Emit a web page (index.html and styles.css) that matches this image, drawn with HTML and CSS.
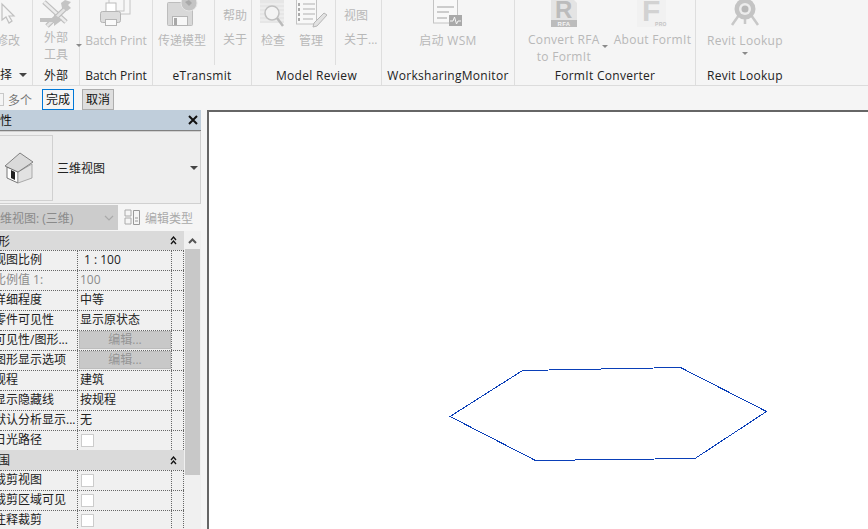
FILE: index.html
```html
<!DOCTYPE html>
<html lang="zh-CN">
<head>
    <meta charset="UTF-8">
    <title>Revit</title>
    <link rel="stylesheet" href="styles.css">
</head>
<body>
    <!-- ribbon -->
    <header class="ribbon">
        <section class="panel p1">
            <div class="tools">
                <div class="tool modify">
                    <svg class="icon" width="24" height="31" viewBox="-4 0 24 31"><path d="M2 4V20L6 17L9 23L12 21L9 16H14Z" fill="#f5f5f5" stroke="#c0c0c0" stroke-width="1.2"/></svg>
                    <span>修改</span>
                </div>
            </div>
            <div class="panel-label select-label"><span>选择</span><i class="caret dark"></i></div>
        </section>
        <section class="panel p2">
            <div class="tools center">
                <div class="tool ext">
                    <svg class="icon" width="36" height="31" viewBox="38 0 36 31">
                        <path d="M44 2L66 22" stroke="#bdbdbd" stroke-width="5"/>
                        <path d="M44 2L66 22" stroke="#ececec" stroke-width="2.500"/>
                        <path d="M68 6L47 26" stroke="#bdbdbd" stroke-width="5"/>
                        <path d="M68 6L47 26" stroke="#e4e4e4" stroke-width="2.500"/>
                        <path d="M61 3L65 0L71 2L68 5L71 8L67 11L62 8Z" fill="#c4c4c4"/>
                        <path d="M40 18H54V14L62 20L54 26V22H40Z" fill="#c2c2c2"/>
                    </svg>
                    <span>外部<br>工具</span>
                    <i class="caret ext-caret"></i>
                </div>
            </div>
            <div class="panel-label">外部</div>
        </section>
        <section class="panel p3">
            <div class="tools center">
                <div class="tool">
                    <svg class="icon" width="34" height="31" viewBox="101 0 34 31">
                        <rect x="115" y="-3" width="17" height="17" fill="#f7f7f7" stroke="#c4c4c4"/>
                        <rect x="111" y="-2" width="15" height="13" fill="#f7f7f7" stroke="#c4c4c4"/>
                        <rect x="108" y="3" width="10" height="9" fill="#fff" stroke="#bbb"/>
                        <rect x="102.500" y="11.500" width="20" height="11" rx="2" fill="#dcdcdc" stroke="#b5b5b5"/>
                        <rect x="107.500" y="19.500" width="11" height="6" fill="#fafafa" stroke="#b5b5b5"/>
                    </svg>
                    <span>Batch Print</span>
                </div>
            </div>
            <div class="panel-label">Batch Print</div>
        </section>
        <section class="panel p4">
            <div class="tools">
                <div class="tool w48">
                    <svg class="icon" width="34" height="31" viewBox="165 0 34 31">
                        <rect x="167.500" y="2.500" width="25" height="23" rx="1" fill="#d8d8d8" stroke="#bdbdbd"/>
                        <rect x="172.500" y="16.500" width="15" height="9" fill="#f7f7f7" stroke="#b5b5b5"/>
                        <rect x="174" y="18" width="3" height="7" fill="#a8a8a8"/>
                        <circle cx="189" cy="3" r="8" fill="#c4c4c4" stroke="#e6e6e6"/>
                        <path d="M185 2L189 0L192 3L189 6Z" fill="#a9a9a9"/>
                    </svg>
                    <span>传递模型</span>
                </div>
                <div class="stack">
                    <span>帮助</span>
                    <span>关于</span>
                </div>
            </div>
            <div class="panel-label wide">eTransmit</div>
        </section>
        <section class="panel p5">
            <div class="tools">
                <div class="tool w24">
                    <svg class="icon" width="28" height="31" viewBox="259 0 28 31">
                        <rect x="260" y="-2" width="24" height="25" fill="#e6e6e6"/>
                        <path d="M260 4H284M260 8H284M260 12H284M260 16H284M260 20H284" stroke="#f3f3f3"/>
                        <circle cx="272" cy="13" r="7" fill="#f3f3f3" stroke="#c0c0c0" stroke-width="1.500"/>
                        <path d="M277 18L283 26" stroke="#bbb" stroke-width="2.500"/>
                    </svg>
                    <span>检查</span>
                </div>
                <div class="tool w24 gap14">
                    <svg class="icon" width="32" height="31" viewBox="297 0 32 31">
                        <rect x="298.500" y="-3" width="20" height="27" fill="#f8f8f8" stroke="#c4c4c4"/>
                        <path d="M305 4H317M305 9H317M305 14H317M305 19H315" stroke="#c8c8c8" stroke-width="1.500"/>
                        <path d="M301 3V22" stroke="#aaa" stroke-width="2" stroke-dasharray="3 2"/>
                        <path d="M326 13L329 15L319 26L315 27L316 23Z" fill="#e2e2e2" stroke="#b5b5b5"/>
                    </svg>
                    <span>管理</span>
                </div>
                <div class="stack view-stack">
                    <span>视图</span>
                    <span>关于...</span>
                </div>
            </div>
            <div class="panel-label wide">Model Review</div>
        </section>
        <section class="panel p6">
            <div class="tools center">
                <div class="tool">
                    <svg class="icon" width="32" height="31" viewBox="433 0 32 31">
                        <rect x="434.500" y="-3" width="24" height="26" fill="#f8f8f8" stroke="#c4c4c4"/>
                        <path d="M438 7H455M438 12H450M438 18H448" stroke="#bdbdbd" stroke-width="1.500"/>
                        <rect x="450" y="15" width="13" height="11" fill="#a9a9a9"/>
                        <path d="M451 21H454L455.500 17L457.500 24L459 21H462" fill="none" stroke="#f5f5f5"/>
                    </svg>
                    <span>启动 WSM</span>
                </div>
            </div>
            <div class="panel-label wide">WorksharingMonitor</div>
        </section>
        <section class="panel p7">
            <div class="tools">
                <div class="tool">
                    <svg class="icon" width="30" height="31" viewBox="548 0 30 31">
                        <path d="M550 -2H571L576 3V27H550Z" fill="#e4e4e4"/>
                        <rect x="550" y="20" width="26" height="7" fill="#bcbcbc"/>
                        <text x="554" y="18" class="rfa-r">R</text>
                        <text x="563" y="26" class="rfa-tag">RFA</text>
                    </svg>
                    <span>Convert RFA<br>to FormIt</span>
                </div>
                <i class="caret conv-caret"></i>
                <div class="tool about">
                    <svg class="icon" width="32" height="31" viewBox="636 0 32 31">
                        <rect x="637" y="-2" width="29" height="29" fill="#f1f1f1"/>
                        <text x="642" y="21" class="f-mark">F</text>
                        <text x="655" y="26" class="f-tag">PRO</text>
                    </svg>
                    <span>About FormIt</span>
                </div>
            </div>
            <div class="panel-label wide">FormIt Converter</div>
        </section>
        <section class="panel p8">
            <div class="tools">
                <div class="tool lookup">
                    <svg class="icon" width="32" height="31" viewBox="730 0 32 31">
                        <path d="M740 15L733 25M752 15L759 25M746 17V24" stroke="#c8c8c8" stroke-width="2.500"/>
                        <circle cx="746" cy="9" r="10.500" fill="#c4c4c4"/>
                        <circle cx="746" cy="9" r="6" fill="#ececec"/>
                        <circle cx="746" cy="9" r="3.500" fill="#b8b8b8"/>
                    </svg>
                    <span>Revit Lookup</span>
                    <i class="caret lookup-caret"></i>
                </div>
            </div>
            <div class="panel-label left wide">Revit Lookup</div>
        </section>
    </header>

    <!-- options bar -->
    <div class="options">
        <label class="multi"><i class="check"></i>多个</label>
        <button class="opt-btn finish">完成</button>
        <button class="opt-btn cancel">取消</button>
    </div>

    <main class="workspace">
        <aside class="props">
            <div class="props-inner">
                <div class="props-title">
                    <span class="clip-title">属性</span>
                    <svg width="10" height="10" viewBox="0 0 10 10"><path d="M1 1L9 9M9 1L1 9" stroke="#111" stroke-width="2"/></svg>
                </div>
                <div class="type-box">
                    <div class="type-thumb">
                        <svg width="32" height="34" viewBox="3 151 32 34">
                            <path d="M7 167L18 172V183L7 178Z" fill="#fff" stroke="#555" stroke-width=".8"/>
                            <path d="M18 172L32 164V178L18 183Z" fill="#e2e2e2" stroke="#999" stroke-width=".8"/>
                            <path d="M5 166L20 153L33 162L18 172Z" fill="#dadada" stroke="#666" stroke-width=".8"/>
                            <path d="M11 170L15 172V180L11 178Z" fill="#222"/>
                        </svg>
                    </div>
                    <span class="type-name">三维视图</span>
                    <i class="caret dark type-caret"></i>
                </div>
                <div class="selector">
                    <div class="view-select">
                        <span>三维视图: (三维)</span>
                        <svg width="10" height="6" viewBox="0 0 10 6"><path d="M1 1L5 5L9 1" fill="none" stroke="#aaa" stroke-width="1.200"/></svg>
                    </div>
                    <div class="edit-type">
                        <svg width="17" height="17" viewBox="0 0 17 17">
                            <path d="M1 1H7V7H1ZM1 9H7V15H1Z" fill="none" stroke="#aaa"/>
                            <path d="M9.500 1.500H15.500V15.500H9.500Z" fill="none" stroke="#999"/>
                            <path d="M11 9H14M11 12H14" stroke="#999"/>
                        </svg>
                        <span>编辑类型</span>
                    </div>
                </div>
                <div class="table-wrap">
                    <div class="grid">
                        <div class="section first">
                            <span>图形</span>
                            <svg class="fold" width="7" height="9" viewBox="0 0 7 9"><path d="M1 4L3.500 1L6 4M1 8L3.500 5L6 8" fill="none" stroke="#111" stroke-width="1.300"/></svg>
                        </div>
                        <div class="row"><div class="name"><span>视图比例</span></div><div class="val scale">1 : 100</div><div class="end"></div></div>
                        <div class="row"><div class="name off"><span>比例值 1:</span></div><div class="val off">100</div><div class="end"></div></div>
                        <div class="row"><div class="name"><span>详细程度</span></div><div class="val">中等</div><div class="end"></div></div>
                        <div class="row"><div class="name"><span>零件可见性</span></div><div class="val">显示原状态</div><div class="end"></div></div>
                        <div class="row"><div class="name"><span>可见性/图形...</span></div><div class="val"><span class="edit-btn">编辑...</span></div><div class="end"></div></div>
                        <div class="row"><div class="name"><span>图形显示选项</span></div><div class="val"><span class="edit-btn">编辑...</span></div><div class="end"></div></div>
                        <div class="row"><div class="name"><span>规程</span></div><div class="val">建筑</div><div class="end"></div></div>
                        <div class="row"><div class="name"><span>显示隐藏线</span></div><div class="val">按规程</div><div class="end"></div></div>
                        <div class="row"><div class="name"><span>默认分析显示...</span></div><div class="val">无</div><div class="end"></div></div>
                        <div class="row"><div class="name"><span>日光路径</span></div><div class="val"><i class="box"></i></div><div class="end"></div></div>
                        <div class="section">
                            <span>范围</span>
                            <svg class="fold" width="7" height="9" viewBox="0 0 7 9"><path d="M1 4L3.500 1L6 4M1 8L3.500 5L6 8" fill="none" stroke="#111" stroke-width="1.300"/></svg>
                        </div>
                        <div class="row"><div class="name"><span>裁剪视图</span></div><div class="val"><i class="box"></i></div><div class="end"></div></div>
                        <div class="row"><div class="name"><span>裁剪区域可见</span></div><div class="val"><i class="box"></i></div><div class="end"></div></div>
                        <div class="row"><div class="name"><span>注释裁剪</span></div><div class="val"><i class="box"></i></div><div class="end"></div></div>
                    </div>
                    <div class="scrollbar">
                        <svg class="scroll-up" width="9" height="6" viewBox="0 0 9 6"><path d="M1 5L4.500 1.500L8 5" fill="none" stroke="#555" stroke-width="2"/></svg>
                        <div class="thumb"></div>
                    </div>
                </div>
            </div>
        </aside>
        <div class="canvas">
            <svg class="sketch" width="659" height="417" viewBox="209 112 659 417">
                <polygon points="450,416.500 522.500,370.500 680.500,367.500 766.500,411.500 695,458.500 535.500,460.500" fill="none" stroke="#0a3fb8" stroke-width="1" shape-rendering="crispEdges"/>
            </svg>
        </div>
    </main>
</body>
</html>
```
FILE: styles.css
```css
html, body {
    margin: 0;
    padding: 0;
}
body {
    width: 868px;
    height: 529px;
    overflow: hidden;
    background-color: #f5f5f5;
    color: #222;
    font-family: "Open Sans", "Noto Sans CJK SC", sans-serif;
    font-size: 12px;
}

/* ribbon */
.ribbon {
    display: flex;
    height: 86px;
    box-sizing: border-box;
    border-bottom: 1px solid #dcdcdc;
}
.panel {
    display: flex;
    flex-direction: column;
    box-sizing: border-box;
    height: 85px;
    flex: none;
    border-right: 1px solid #dedede;
    overflow: hidden;
}
.p1 { width: 33px; }
.p2 { width: 47px; overflow: visible; }
.p3 { width: 73px; }
.p4 { width: 99px; }
.p5 { width: 130px; }
.p6 { width: 133px; }
.p7 { width: 181px; }
.p8 { flex: 1; border-right: none; }

.tools {
    display: flex;
    height: 65px;
}
.tools.center {
    justify-content: center;
}
.panel-label {
    height: 20px;
    line-height: 22px;
    text-align: center;
    white-space: nowrap;
}
.panel-label.wide {
    letter-spacing: .3px;
}
.panel-label.left {
    text-align: left;
    padding-left: 11px;
}
.select-label {
    display: flex;
    align-items: center;
    margin-left: -12px;
}

.tool {
    position: relative;
    display: flex;
    flex-direction: column;
    align-items: center;
    flex: none;
    color: #b8b8b8;
    line-height: 17px;
    text-align: center;
    white-space: nowrap;
}
.icon {
    display: block;
    flex: none;
    overflow: hidden;
    margin-bottom: 1px;
}
.p6 .tool, .p7 .tool, .p8 .tool {
    letter-spacing: .3px;
}
.p7 .icon {
    margin-bottom: 0;
}
.ext span {
    margin-top: -3px;
}
.modify {
    width: 24px;
    margin-left: -4px;
}
.w48 {
    width: 48px;
    margin-left: 5px;
}
.w24 {
    width: 24px;
}
.p5 .tools {
    padding-left: 9px;
}
.gap14 {
    margin-left: 14px;
}
.p7 .tools {
    padding-left: 13px;
}
.about {
    margin-left: 6px;
}
.lookup {
    margin-left: 11px;
}

.stack {
    display: flex;
    flex-direction: column;
    gap: 6px;
    flex: none;
    margin-left: 8px;
    padding: 7px 0 0 8px;
    border-left: 1px solid #dedede;
    color: #b8b8b8;
    line-height: 18px;
    white-space: nowrap;
}
.view-stack {
    margin-left: 12px;
}

.caret {
    display: block;
    width: 0;
    height: 0;
    flex: none;
    border-left: 3px solid transparent;
    border-right: 3px solid transparent;
    border-top: 3px solid #8a8a8a;
}
.caret.dark {
    margin-left: 7px;
    border-left-width: 4px;
    border-right-width: 4px;
    border-top: 4px solid #444;
}
.ext-caret {
    position: absolute;
    top: 44px;
    right: -8px;
}
.conv-caret {
    margin: 45px 0 0 2px;
}
.lookup-caret {
    margin-top: 3px;
}
.rfa-r {
    font-family: "Liberation Sans", sans-serif;
    font-size: 24px;
    font-weight: bold;
    fill: #bcbcbc;
}
.rfa-tag {
    font-family: "Liberation Sans", sans-serif;
    font-size: 6px;
    font-weight: bold;
    fill: #f5f5f5;
    text-anchor: middle;
}
.f-mark {
    font-family: "Liberation Sans", sans-serif;
    font-size: 30px;
    font-weight: bold;
    fill: #d2d2d2;
}
.f-tag {
    font-family: "Liberation Sans", sans-serif;
    font-size: 5px;
    font-weight: bold;
    fill: #c4c4c4;
}

/* options bar */
.options {
    display: flex;
    align-items: center;
    height: 24px;
    box-sizing: border-box;
    padding-top: 3px;
}
.multi {
    display: flex;
    align-items: center;
    color: #777;
    width: 42px;
    flex: none;
}
.check {
    display: block;
    width: 11px;
    height: 11px;
    flex: none;
    margin: 0 4px 0 -9px;
    border: 1px solid #c8c8c8;
}
.opt-btn {
    width: 32px;
    height: 21px;
    padding: 0 0 2px;
    margin-right: 8px;
    box-sizing: border-box;
    font: inherit;
    color: #111;
}
.finish {
    background-color: #f5f5f5;
    border: 1px solid #0078d7;
}
.cancel {
    background-color: #dedede;
    border: 1px solid #adadad;
}

/* properties palette */
.workspace {
    display: flex;
    height: 419px;
}
.props {
    width: 207px;
    flex: none;
    overflow: hidden;
}
.props-inner {
    width: 201px;
    background-color: #f0f0f0;
}
.props-title {
    display: flex;
    align-items: center;
    justify-content: space-between;
    height: 21px;
    box-sizing: border-box;
    padding-right: 3px;
    background-color: #c0cedb;
    border-bottom: 1px solid #808080;
    color: #111;
}
.clip-title {
    margin-left: -12px;
}
.type-box {
    display: flex;
    align-items: center;
    height: 73px;
    box-sizing: border-box;
    padding: 3px 0;
    border-top: 1px solid #d0d0d0;
    border-bottom: 1px solid #d0d0d0;
    border-right: 1px solid #d0d0d0;
    background-color: #eeeeee;
}
.type-thumb {
    display: flex;
    align-items: center;
    width: 53px;
    height: 66px;
    box-sizing: border-box;
    padding-left: 3px;
    border: 1px solid #d0d0d0;
    border-left: none;
    flex: none;
}
.type-name {
    margin-left: 4px;
    color: #222;
    flex: 1;
}
.type-caret {
    margin: 0 2px 0 0;
}
.selector {
    display: flex;
    align-items: center;
    height: 27px;
    background-color: #f5f5f5;
}
.view-select {
    display: flex;
    align-items: center;
    justify-content: space-between;
    width: 118px;
    height: 25px;
    box-sizing: border-box;
    padding-right: 4px;
    flex: none;
    background-color: #cccccc;
    color: #8a8a8a;
    overflow: hidden;
    white-space: nowrap;
}
.view-select span {
    margin-left: -12px;
}
.edit-type {
    display: flex;
    align-items: center;
    gap: 4px;
    margin-left: 6px;
    color: #aaa;
}

.table-wrap {
    display: flex;
    height: 298px;
    overflow: hidden;
}
.grid {
    width: 184px;
    flex: none;
}
.section {
    display: flex;
    align-items: center;
    justify-content: space-between;
    height: 20px;
    padding-right: 7px;
    background-color: #dadada;
    color: #222;
    overflow: hidden;
}
.section.first {
    height: 19px;
}
.section span {
    margin-left: -14px;
}
.row {
    display: grid;
    grid-template-columns: 78px 94px 12px;
    height: 20px;
    box-sizing: border-box;
    border-top: 1px dotted #666;
    line-height: 18px;
}
.name, .val, .end {
    box-sizing: border-box;
    border-right: 1px dotted #666;
    white-space: nowrap;
    overflow: hidden;
}
.name span {
    margin-left: -6px;
    display: inline-block;
}
.val {
    padding-left: 2px;
}
.off {
    color: #8c8c8c;
}
.scale {
    padding-left: 6px;
}
.edit-btn {
    display: block;
    width: 92px;
    height: 18px;
    margin-left: -1px;
    box-sizing: border-box;
    border: 1px solid #bdbdbd;
    background-color: #c8c8c8;
    color: #959595;
    line-height: 16px;
    text-align: center;
}
.box {
    display: block;
    width: 13px;
    height: 13px;
    box-sizing: border-box;
    margin: 3px 0 0 1px;
    border: 1px solid #cccccc;
    background-color: #fff;
}
.scrollbar {
    display: flex;
    flex-direction: column;
    align-items: center;
    width: 15px;
    flex: none;
    margin-left: 1px;
}
.scroll-up {
    flex: none;
    margin-top: 7px;
}
.thumb {
    width: 15px;
    height: 226px;
    flex: none;
    margin-top: 5px;
    background-color: #c8c8c8;
}

/* drawing area */
.canvas {
    position: relative;
    flex: 1;
    background-color: #fff;
    border-left: 2px solid #666;
    border-top: 2px solid #666;
}
.sketch {
    position: absolute;
    left: 0;
    top: 0;
}
```
